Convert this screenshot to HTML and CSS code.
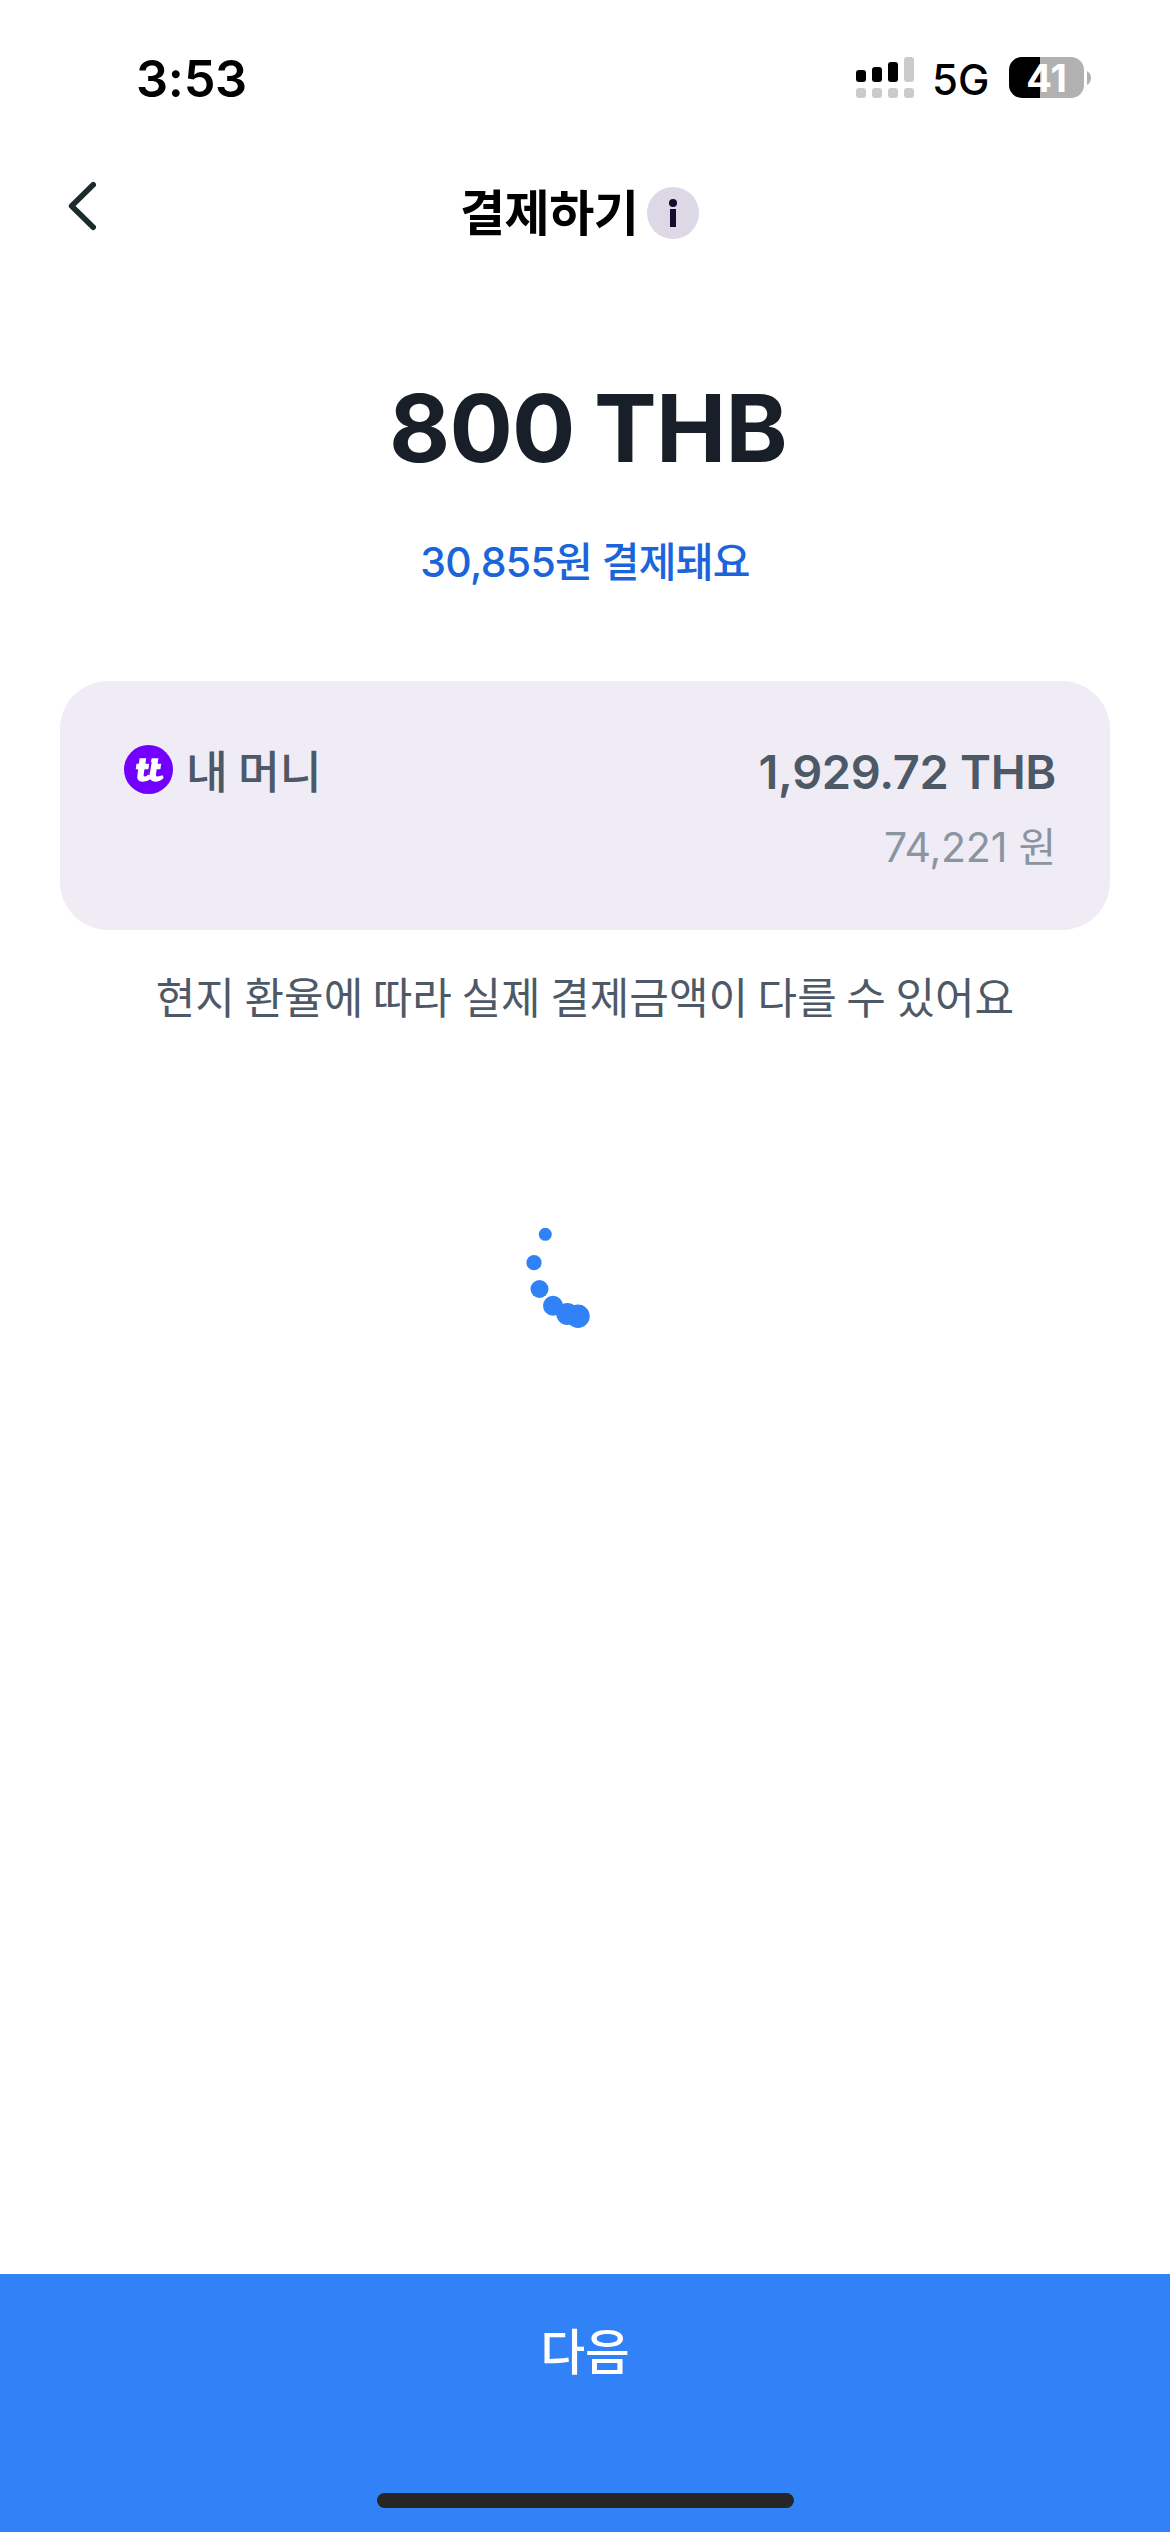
FILE: index.html
```html
<!DOCTYPE html>
<html lang="ko">
<head>
<meta charset="utf-8">
<title>결제하기</title>
<link rel="stylesheet" href="styles.css">
</head>
<body>
<div class="screen">
  <header class="status">
    <span class="time">3:53</span>
    <div class="indicators">
      <svg class="signal" viewBox="0 0 58 41"><g fill="#cbcbcb"><rect x="48" width="10" height="25" rx="3"/><rect y="31" width="10" height="10" rx="3"/><rect x="16" y="31" width="10" height="10" rx="3"/><rect x="32" y="31" width="10" height="10" rx="3"/><rect x="48" y="31" width="10" height="10" rx="3"/></g><rect y="13" width="10" height="12" rx="3"/><rect x="16" y="10" width="10" height="15" rx="3"/><rect x="32" y="5" width="10" height="20" rx="3"/></svg>
      <span class="network">5G</span>
      <div class="battery"><span class="level">41</span></div>
      <svg class="nub" viewBox="0 0 4 14"><path d="M0 0Q4 2.500 4 7T0 14Z" fill="#b1b1b1"/></svg>
    </div>
  </header>
  <nav class="nav">
    <svg class="back" viewBox="0 0 28 50"><path d="M25.200 3.800L3.600 25L25.200 46.200" fill="none" stroke="#1c2b2b" stroke-width="5.600" stroke-linecap="round" stroke-linejoin="round"/></svg>
    <h1 class="title">결제하기</h1>
    <svg class="info" viewBox="0 0 52 52"><circle cx="26" cy="26" r="26" fill="#dcd8e5"/><circle cx="26" cy="16" r="4" fill="#170b2e"/><rect x="23" y="22" width="6" height="18" fill="#170b2e"/></svg>
  </nav>
  <main class="main">
    <p class="amount">800 THB</p>
    <p class="converted">30,855원 결제돼요</p>
    <section class="card">
      <svg class="logo" viewBox="0 0 49 49"><circle cx="24.500" cy="24.500" r="24.500" fill="#7300ff"/><path d="M15.600 13.300H22.200L21.400 18.700H25.200L24.400 24.200H20.500L19.600 30Q19.500 31.700 21.200 31.500Q23.200 31.200 24.300 28.800L27.700 13.300H34.400L33.600 18.700H37.200L36.400 24.200H32.700L31.900 29.500Q31.700 31.500 33.500 31.500Q36 31.400 38.500 30.300L39.700 32.700Q36.500 36.500 31 36.700Q27.600 36.700 26.300 34.300Q23.500 36.700 18.800 36.700Q12.800 36.700 13.300 31.500L14.100 24.200H11.700L12.500 18.700H14.900Z" fill="#fff"/><path d="M26.900 17L24.700 30" stroke="#7300ff" stroke-width="1.600"/></svg>
      <span class="wallet">내 머니</span>
      <div class="balance"><span class="thb">1,929.72 THB</span><span class="krw">74,221 원</span></div>
    </section>
    <p class="note">현지 환율에 따라 실제 결제금액이 다를 수 있어요</p>
    <svg class="spinner" viewBox="0 0 120 120" fill="#3182f7"><circle cx="20.300" cy="14.300" r="6.500"/><circle cx="9" cy="42.700" r="7.600"/><circle cx="14.500" cy="69" r="9"/><circle cx="28" cy="85.700" r="10"/><circle cx="42.300" cy="94" r="11"/><circle cx="53" cy="96.300" r="11.700"/></svg>
  </main>
  <footer class="next"><span class="next-label">다음</span><i class="home"></i></footer>
</div>
</body>
</html>
```

FILE: styles.css
```css
* { box-sizing: border-box; margin: 0; padding: 0; }
body { width: 1170px; background: #fff; font-family: Inter, "Noto Sans CJK KR", sans-serif; }
svg { display: block; flex: none; }
span, p, h1 { white-space: nowrap; }
.screen { display: flex; flex-direction: column; height: 2532px; overflow: hidden; }
.status { display: flex; justify-content: space-between; height: 160px; padding: 57px 79px 0 136px; color: #000; }
.time { font-size: 50.500px; font-weight: 600; line-height: 43px; letter-spacing: -0.3px; }
.indicators { display: flex; height: 41px; align-items: center; }
.signal { width: 58px; height: 41px; }
.network { width: 77px; margin-left: 18px; padding-top: 3px; font-size: 42px; font-weight: 500; line-height: 41px; }
.battery { width: 75px; height: 41px; border-radius: 13px; background: linear-gradient(90deg, #000 31px, #b1b1b1 31px); text-align: center; }
.level { color: #fff; font-size: 38px; font-weight: 700; line-height: 42px; }
.nub { width: 4px; height: 14px; margin-left: 3px; }
.nav { display: grid; grid-template-columns: 392px 187px auto; justify-content: start; height: 108px; padding: 21px 0 0 68px; }
.back { width: 28px; height: 50px; }
.title { font-size: 49px; font-weight: 700; line-height: 66px; letter-spacing: -0.5px; }
.info { width: 52px; height: 52px; margin-top: 6px; }
.main { flex: 1; padding: 0 60px; }
.amount { margin-top: 105px; padding-left: 6px; font-size: 94px; font-weight: 700; line-height: 110px; text-align: center; color: #191f28; letter-spacing: -0.7px; word-spacing: -2.300px; }
.converted { margin-top: 49px; font-size: 41px; font-weight: 500; line-height: 60px; text-align: center; color: #1b64da; letter-spacing: -0.7px; word-spacing: -0.7px; }
.card { display: flex; height: 249px; margin-top: 89px; padding: 64px 54px 0 64px; border-radius: 48px; background: #f0ecf6; }
.logo { width: 49px; height: 49px; }
.wallet { margin-left: 13px; font-size: 45.500px; font-weight: 500; line-height: 56px; word-spacing: -2px; color: #4e5968; }
.balance { display: flex; flex: 1; flex-direction: column; align-items: flex-end; }
.thb { font-size: 47px; font-weight: 600; line-height: 54px; color: #4e5968; letter-spacing: -0.35px; }
.krw { margin-top: 18px; font-size: 41px; line-height: 60px; color: #8b95a1; letter-spacing: -0.2px; }
.note { margin-top: 38px; font-size: 43px; line-height: 60px; text-align: center; color: #4e5968; word-spacing: -2.500px; }
.spinner { width: 120px; height: 120px; margin: 192px 0 0 465px; }
.next { display: flex; flex-direction: column; align-items: center; justify-content: space-between; height: 258px; padding: 49px 0 24px; background: #3182f7; }
.next-label { font-size: 48.500px; font-weight: 500; line-height: 60px; color: #fff; }
.home { width: 417px; height: 15px; border-radius: 8px; background: #262626; }
```
